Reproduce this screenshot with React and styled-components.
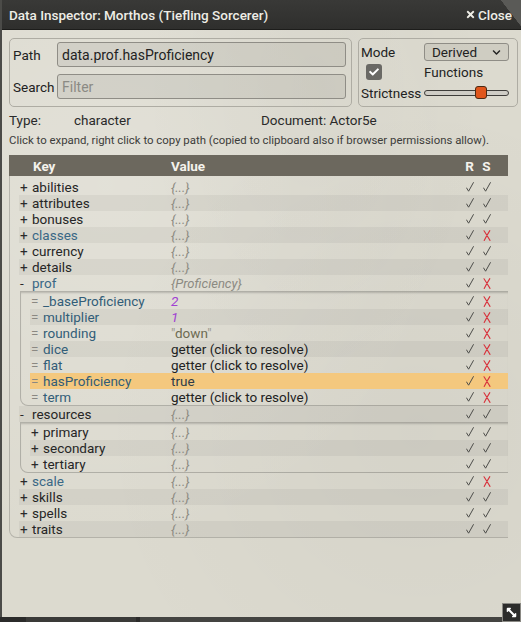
import React from 'react';
import styled, { createGlobalStyle } from 'styled-components';
import { FaTimes, FaCheck, FaChevronDown, FaArrowsAltH } from 'react-icons/fa';

const GlobalStyle = createGlobalStyle`
  html, body {
    margin: 0;
    padding: 0;
    background: #2a2a29;
  }
  body {
    font-family: Roboto, "Liberation Sans", sans-serif;
    color: #222;
  }
`;

const OBJ = { kind: 'obj', text: '{...}' };

const tree = [
  { k: 'abilities', v: OBJ, s: true },
  { k: 'attributes', v: OBJ, s: true },
  { k: 'bonuses', v: OBJ, s: true },
  { k: 'classes', v: OBJ, s: false, blue: true },
  { k: 'currency', v: OBJ, s: true },
  { k: 'details', v: OBJ, s: true },
  {
    k: 'prof', v: { kind: 'obj', text: '{Proficiency}' }, s: false, blue: true, open: true,
    children: [
      { k: '_baseProficiency', v: { kind: 'num', text: '2' }, s: false, blue: true, leaf: true },
      { k: 'multiplier', v: { kind: 'num', text: '1' }, s: false, blue: true, leaf: true },
      { k: 'rounding', v: { kind: 'str', text: 'down' }, s: false, blue: true, leaf: true },
      { k: 'dice', v: { kind: 'getter', text: 'getter (click to resolve)' }, s: false, blue: true, leaf: true },
      { k: 'flat', v: { kind: 'getter', text: 'getter (click to resolve)' }, s: false, blue: true, leaf: true },
      { k: 'hasProficiency', v: { kind: 'bool', text: 'true' }, s: false, blue: true, leaf: true, active: true },
      { k: 'term', v: { kind: 'getter', text: 'getter (click to resolve)' }, s: false, blue: true, leaf: true },
    ],
  },
  {
    k: 'resources', v: OBJ, s: true, open: true,
    children: [
      { k: 'primary', v: OBJ, s: true },
      { k: 'secondary', v: OBJ, s: true },
      { k: 'tertiary', v: OBJ, s: true },
    ],
  },
  { k: 'scale', v: OBJ, s: false, blue: true },
  { k: 'skills', v: OBJ, s: true },
  { k: 'spells', v: OBJ, s: true },
  { k: 'traits', v: OBJ, s: true },
];

const Tick = () => (
  <svg width="8" height="10" viewBox="0 0 8 10">
    <path d="M0.6 6 L2.6 9.2 L7.4 0.6" fill="none" stroke="#4d4d4a" strokeWidth="1" strokeLinecap="round" strokeLinejoin="round" />
  </svg>
);

const Cross = () => (
  <svg width="8" height="11" viewBox="0 0 8 11">
    <path d="M1 0.8 Q4 5.5 7 10.4 M6.8 0.6 Q4 5 1.2 10.4" fill="none" stroke="#d8323c" strokeWidth="1.1" strokeLinecap="round" />
  </svg>
);

const Value = ({ v }) => {
  if (v.kind === 'str') {
    return (
      <ValueText $kind="str">
        <Quote>"</Quote>{v.text}<Quote>"</Quote>
      </ValueText>
    );
  }
  return <ValueText $kind={v.kind}>{v.text}</ValueText>;
};

const Branch = ({ items, depth }) => (
  <>
    {items.map((it, i) => (
      <React.Fragment key={it.k}>
        <Row $depth={depth} $odd={i % 2 === 1} $active={it.active}>
          <KeyCell>
            <Toggle $leaf={it.leaf}>{it.leaf ? '=' : it.open ? '-' : '+'}</Toggle>
            <KeyName $blue={it.blue} $deep={depth > 0}>{it.k}</KeyName>
          </KeyCell>
          <Value v={it.v} />
          <Flag><Tick /></Flag>
          <Flag>{it.s ? <Tick /> : <Cross />}</Flag>
        </Row>
        {it.children && (
          <Nested>
            <Branch items={it.children} depth={depth + 1} />
          </Nested>
        )}
      </React.Fragment>
    ))}
  </>
);

export default function App() {
  return (
    <Page>
      <GlobalStyle />
      <Window>
        <TitleBar>
          <span>Data Inspector: Morthos (Tiefling Sorcerer)</span>
          <CloseBtn><FaTimes size={11} />Close</CloseBtn>
        </TitleBar>
        <Content>
          <Panels>
            <Fieldset>
              <FieldRow>
                <FieldLabel>Path</FieldLabel>
                <Input>data.prof.hasProficiency</Input>
              </FieldRow>
              <FieldRow>
                <FieldLabel>Search</FieldLabel>
                <Input $placeholder>Filter</Input>
              </FieldRow>
            </Fieldset>
            <Options>
              <FieldLabel>Mode</FieldLabel>
              <Select>Derived<FaChevronDown size={9} /></Select>
              <CheckWrap><Checkbox><FaCheck size={10} /></Checkbox></CheckWrap>
              <FieldLabel>Functions</FieldLabel>
              <FieldLabel>Strictness</FieldLabel>
              <Track><Thumb style={{ left: '50px' }} /></Track>
            </Options>
          </Panels>

          <Meta>
            <span>Type:</span>
            <span>character</span>
            <span>Document: Actor5e</span>
          </Meta>
          <Hint>Click to expand, right click to copy path (copied to clipboard also if browser permissions allow).</Hint>

          <Table>
            <HeadRow>
              <span>Key</span>
              <span>Value</span>
              <HeadFlag>R</HeadFlag>
              <HeadFlag>S</HeadFlag>
            </HeadRow>
            <Body>
              <Branch items={tree} depth={0} />
            </Body>
          </Table>
        </Content>
      </Window>
      <Backdrop />
      <Resize><FaArrowsAltH size={13} /></Resize>
    </Page>
  );
}

const Page = styled.div`
  position: relative;
  width: 521px;
  height: 622px;
  overflow: hidden;
  display: flex;
  flex-direction: column;
`;

const Window = styled.div`
  height: 617px;
  flex: none;
  display: flex;
  flex-direction: column;
  border-left: 2px solid #4b4b48;
  background:
    radial-gradient(ellipse at 20% 30%, rgba(255,255,255,0.18), transparent 60%),
    radial-gradient(ellipse at 80% 70%, rgba(0,0,0,0.03), transparent 55%),
    radial-gradient(ellipse at 60% 15%, rgba(0,0,0,0.025), transparent 40%),
    #dcdacf;
`;

const TitleBar = styled.header`
  position: relative;
  height: 29px;
  flex: none;
  display: flex;
  align-items: center;
  justify-content: space-between;
  padding: 0 9px 0 7px;
  background: linear-gradient(#393937, #2f2f2d);
  border-bottom: 1px solid #1d1d1b;
  color: #eeede6;
  font-size: 13.5px;
  font-weight: 500;

  &::after {
    content: '';
    position: absolute;
    top: 0;
    right: 0;
    width: 20px;
    height: 26px;
    background: linear-gradient(to bottom left, #5a5a57 50%, transparent 51%);
  }
`;

const CloseBtn = styled.span`
  position: relative;
  z-index: 1;
  display: flex;
  align-items: center;
  gap: 2px;
`;

const Content = styled.div`
  flex: 1;
  display: flex;
  flex-direction: column;
  padding: 8px 3px 0 7px;
  font-size: 13.5px;
`;

const Panels = styled.div`
  display: grid;
  grid-template-columns: 343px 160px;
  gap: 6px;
`;

const Fieldset = styled.div`
  height: 69px;
  box-sizing: border-box;
  border: 1px solid #aeaca3;
  border-radius: 5px;
  padding: 3px 5px 0 3px;
  display: flex;
  flex-direction: column;
  gap: 7px;
`;

const FieldRow = styled.div`
  display: grid;
  grid-template-columns: 44px 1fr;
  align-items: center;
`;

const FieldLabel = styled.span`
  color: #222;
  font-size: 13.5px;
  line-height: 16px;
`;

const Input = styled.div`
  height: 25px;
  box-sizing: border-box;
  border: 1px solid #8f8d86;
  border-radius: 3px;
  background: rgba(0, 0, 0, 0.06);
  padding: 0 4px;
  display: flex;
  align-items: center;
  font-size: 14px;
  color: ${p => (p.$placeholder ? '#8b8a84' : '#222')};
`;

const Options = styled.div`
  height: 69px;
  box-sizing: border-box;
  border: 1px solid #aeaca3;
  border-radius: 5px;
  padding: 4px 4px 0 2px;
  display: grid;
  grid-template-columns: 63px 85px;
  grid-template-rows: 18px 19px 21px;
  row-gap: 1px;
  align-items: center;
`;

const Select = styled.div`
  height: 18px;
  box-sizing: border-box;
  border: 1px solid #8f8d86;
  border-radius: 3px;
  background: rgba(0, 0, 0, 0.06);
  display: flex;
  align-items: center;
  justify-content: space-between;
  padding: 0 7px 0 7px;
  font-size: 13.5px;
  color: #222;
`;

const CheckWrap = styled.div`
  padding-left: 5px;
  display: flex;
  align-items: center;
`;

const Checkbox = styled.span`
  width: 16px;
  height: 16px;
  border-radius: 3px;
  background: #6a6965;
  color: #fff;
  display: flex;
  align-items: center;
  justify-content: center;
`;

const Track = styled.div`
  position: relative;
  height: 6px;
  box-sizing: border-box;
  border: 1.5px solid #3e3d3a;
  border-radius: 4px;
  background: #cfcdc6;
`;

const Thumb = styled.span`
  position: absolute;
  top: -5px;
  width: 12px;
  height: 13px;
  box-sizing: border-box;
  border: 1px solid #4b2a14;
  border-radius: 3px;
  background: #e0561c;
`;

const Meta = styled.div`
  display: grid;
  grid-template-columns: 65px 187px auto;
  margin-top: 5px;
  line-height: 16px;
  color: #2a2a2a;
`;

const Hint = styled.div`
  margin-top: 4px;
  font-size: 11.4px;
  line-height: 16px;
  color: #3c3c3a;
`;

const Table = styled.div`
  margin-top: 7px;
  margin-right: 10px;
  display: flex;
  flex-direction: column;
`;

const HeadRow = styled.div`
  display: grid;
  grid-template-columns: 138px 1fr 17px 17px;
  align-items: center;
  height: 21px;
  padding: 0 13px 0 24px;
  background: #6c685e;
  color: #f4f2ec;
  font-weight: 700;
  font-size: 13.5px;
`;

const HeadFlag = styled.span`
  text-align: center;
`;

const Body = styled.div`
  padding: 3px 0 0 9px;
  border-left: 1px solid rgba(0, 0, 0, 0.18);
  border-bottom: 1px solid rgba(0, 0, 0, 0.18);
  border-bottom-left-radius: 8px;
`;

const Row = styled.div`
  display: grid;
  grid-template-columns: ${p => 152 - p.$depth * 11}px 1fr 17px 17px;
  align-items: center;
  height: 16px;
  padding-right: 13px;
  background: ${p => (p.$active ? '#f4c87e' : p.$odd ? 'rgba(0, 0, 0, 0.045)' : 'transparent')};
`;

const KeyCell = styled.div`
  display: flex;
  align-items: center;
  white-space: nowrap;
`;

const Toggle = styled.span`
  width: 13px;
  padding-left: 1px;
  box-sizing: border-box;
  color: ${p => (p.$leaf ? '#8a8882' : '#2a2a2a')};
`;

const KeyName = styled.span`
  color: ${p => (p.$blue ? (p.$deep ? '#325d78' : '#3a6886') : '#262626')};
`;

const valueColors = {
  obj: '#8c8a82',
  num: '#a040d2',
  str: '#6d6b52',
  getter: '#222',
  bool: '#2e3b48',
};

const ValueText = styled.span`
  white-space: nowrap;
  color: ${p => valueColors[p.$kind]};
  font-style: ${p => (p.$kind === 'obj' || p.$kind === 'num' ? 'italic' : 'normal')};
  font-size: ${p => (p.$kind === 'obj' ? '13px' : '13.5px')};
`;

const Quote = styled.span`
  color: #9a988f;
`;

const Flag = styled.span`
  display: flex;
  justify-content: center;
  align-items: center;
`;

const Nested = styled.div`
  margin-left: 1px;
  padding: 1px 0 0 9px;
  border: 1px solid rgba(0, 0, 0, 0.2);
  border-right: none;
  border-bottom-left-radius: 8px;
  box-shadow: inset 0 2px 2px -1px rgba(0, 0, 0, 0.18);
`;

const Backdrop = styled.div`
  flex: 1;
  background: linear-gradient(90deg, #2b2b2a 0 26px, #3a3a38 26px 136px, #2b2b2a 136px 140px, #444441 140px);
`;

const Resize = styled.div`
  position: absolute;
  right: 0;
  bottom: 0;
  width: 19px;
  height: 19px;
  box-sizing: border-box;
  border: 1px solid #8a8984;
  background: #2c2c2b;
  color: #fff;
  display: flex;
  align-items: center;
  justify-content: center;

  svg {
    transform: rotate(45deg);
  }
`;
